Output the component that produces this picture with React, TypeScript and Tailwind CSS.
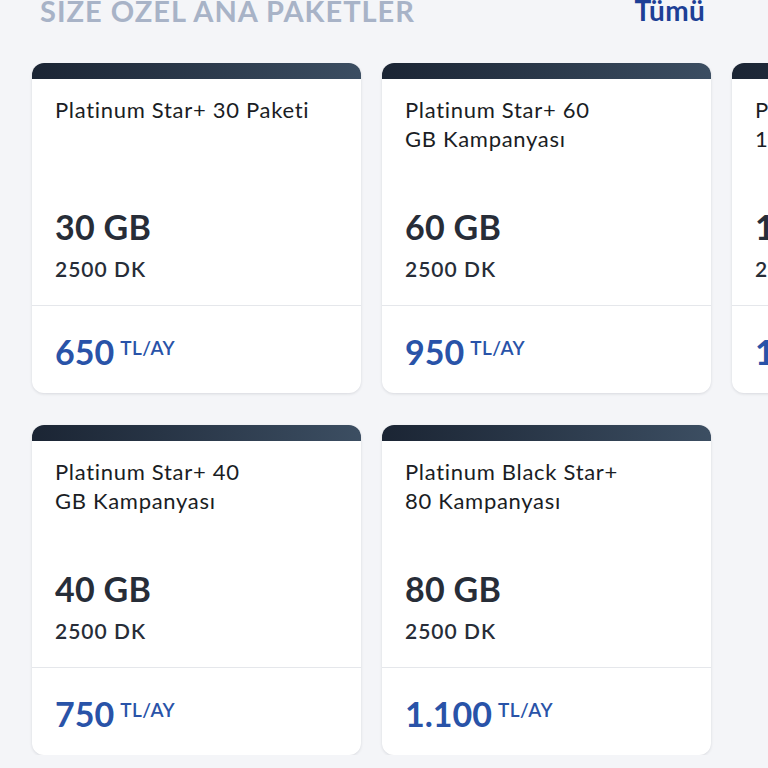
import React from 'react';

interface Paket {
  id: number;
  title: string[];
  data: string;
  minutes: string;
  price: string;
}

const paketler: Paket[] = [
  { id: 1, title: ['Platinum Star+ 30 Paketi'], data: '30 GB', minutes: '2500 DK', price: '650' },
  { id: 2, title: ['Platinum Star+ 40', 'GB Kampanyası'], data: '40 GB', minutes: '2500 DK', price: '750' },
  { id: 3, title: ['Platinum Star+ 60', 'GB Kampanyası'], data: '60 GB', minutes: '2500 DK', price: '950' },
  { id: 4, title: ['Platinum Black Star+', '80 Kampanyası'], data: '80 GB', minutes: '2500 DK', price: '1.100' },
  { id: 5, title: ['Platinum Star+', '100 GB Kampanyası'], data: '100 GB', minutes: '2500 DK', price: '1.350' },
];

const PaketCard: React.FC<{ paket: Paket }> = ({ paket }) => (
  <div className="flex flex-col rounded-[12px] overflow-hidden bg-white shadow-[0_1px_3px_rgba(15,23,42,0.12)]">
    <div className="h-4 bg-gradient-to-r from-[#1b2534] to-[#3c4e62]" />
    <div className="px-[23px] pt-[16px] pb-[24px] border-b border-[#e5e7eb]">
      <div className="h-[111px]">
        <h3 className="text-[22px] leading-[29px] font-normal tracking-[0.7px] text-[#1a1d24] whitespace-nowrap">
          {paket.title.map((line, i) => (
            <span key={i} className="block">{line}</span>
          ))}
        </h3>
      </div>
      <div className="text-[34px] leading-[41px] font-bold tracking-[0.3px] text-[#272d38] whitespace-nowrap">{paket.data}</div>
      <div className="mt-[9px] text-[21px] leading-[25px] font-semibold tracking-[1px] text-[#272d38] whitespace-nowrap">
        {paket.minutes}
      </div>
    </div>
    <div className="px-[23px] pt-[25px] pb-[21px] flex items-start whitespace-nowrap">
      <span className="text-[34px] leading-[41px] font-bold text-[#2953a8]">{paket.price}</span>
      <span className="ml-[6px] mt-[5px] text-[19px] leading-[23px] font-semibold tracking-[0.5px] text-[#2953a8]">TL/AY</span>
    </div>
  </div>
);

export default function App() {
  return (
    <div className="w-[768px] h-[768px] overflow-hidden bg-[#f4f5f8] font-['Lato','Noto_Sans',sans-serif]">
      <div className="flex justify-between items-start pl-[40px] pr-[63px] -mt-[5px]">
        <h2 className="text-[29px] leading-[31px] font-bold tracking-[1px] text-[#a8b3c7] whitespace-nowrap">SİZE ÖZEL ANA PAKETLER</h2>
        <button className="text-[28px] leading-[31px] font-bold tracking-[0.3px] text-[#1d3f96]">Tümü</button>
      </div>
      <div className="mt-[37px] pl-8 overflow-hidden">
        <div className="grid grid-flow-col grid-rows-2 auto-cols-[329px] gap-x-[21px] gap-y-[32px]">
          {paketler.map((p) => (
            <PaketCard key={p.id} paket={p} />
          ))}
        </div>
      </div>
    </div>
  );
}
